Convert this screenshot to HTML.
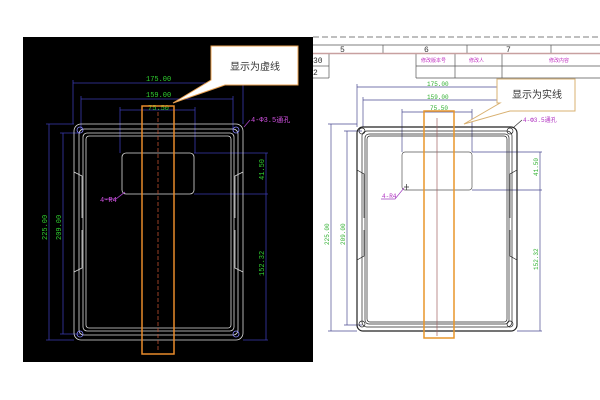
<!DOCTYPE html>
<html><head><meta charset="utf-8"><style>
html,body{margin:0;padding:0;background:#fff;width:600px;height:400px;overflow:hidden}
svg{display:block}
text{font-family:"Liberation Mono","Noto Sans CJK SC",monospace}
</style></head><body>
<svg width="600" height="400" viewBox="0 0 600 400" xmlns="http://www.w3.org/2000/svg">
<rect x="23" y="37" width="290" height="325" fill="#000"/>
<rect x="310" y="37" width="3" height="316" fill="#000"/>
<!-- LEFT DRAWING -->
<g fill="none" stroke-width="0.8">
 <g stroke="#3a3ab0">
  <line x1="73" y1="83" x2="243" y2="83"/><line x1="73" y1="80" x2="73" y2="124"/><line x1="243" y1="80" x2="243" y2="124"/>
  <line x1="81" y1="99" x2="233" y2="99"/><line x1="81" y1="96" x2="81" y2="130"/><line x1="233" y1="96" x2="233" y2="130"/>
  <line x1="120" y1="110" x2="195" y2="110"/><line x1="120" y1="107" x2="120" y2="153"/><line x1="195" y1="107" x2="195" y2="153"/>
  <line x1="49" y1="124" x2="49" y2="340"/><line x1="46" y1="124" x2="74" y2="124"/><line x1="46" y1="340" x2="74" y2="340"/>
  <line x1="63" y1="133" x2="63" y2="334"/><line x1="60" y1="133" x2="80" y2="133"/><line x1="60" y1="334" x2="80" y2="334"/>
  <line x1="266" y1="153" x2="266" y2="340"/><line x1="194" y1="153" x2="268" y2="153"/><line x1="194" y1="194" x2="268" y2="194"/><line x1="243" y1="340" x2="268" y2="340"/>
 </g>
 <g stroke="#ddd">
  <rect x="74" y="124" width="169" height="216" rx="7"/>
  <rect x="79" y="129" width="159" height="206" rx="5"/>
  <rect x="83" y="133" width="151" height="198" rx="4"/>
  <rect x="86" y="136" width="145" height="192" rx="3"/>
  <rect x="122" y="153" width="72" height="41" rx="4"/>
  <path d="M74 172 L82 176 L82 218 M74 272 L82 268 L82 230 M243 172 L235 176 L235 218 M243 272 L235 268 L235 230"/>
 </g>
 <g stroke="#8888ff"><circle cx="80" cy="130" r="3"/><circle cx="236" cy="130" r="3"/><circle cx="80" cy="334" r="3"/><circle cx="236" cy="334" r="3"/></g>
 <line x1="158" y1="112" x2="158" y2="352" stroke="#c05030" stroke-dasharray="4,2"/>
 <path d="M125 192 L116 199 L104 199" stroke="#a040c0"/>
 <line x1="244" y1="127" x2="250" y2="120" stroke="#a040c0"/>
</g>
<g font-size="7" fill="#30d030">
 <text x="146" y="81">175.00</text><text x="146" y="97">159.00</text><text x="148" y="110">75.50</text>
 <text transform="translate(47,240) rotate(-90)">225.00</text>
 <text transform="translate(61,240) rotate(-90)">209.00</text>
 <text transform="translate(264,180) rotate(-90)">41.50</text>
 <text transform="translate(264,276) rotate(-90)">152.32</text>
</g>
<g font-size="7" fill="#d050e0"><text x="251" y="122">4-Φ3.5通孔</text><text x="100" y="202">4-R4</text></g>
<rect x="142" y="106" width="32" height="248" fill="none" stroke="#e88a2a" stroke-width="1.5"/>
<path d="M211 46 H298 V85 H225 L173 103 L211 80 Z" fill="#fff" stroke="#e8a050" stroke-width="1"/>
<text x="230" y="70" font-size="10" fill="#333" font-family="'Noto Sans CJK SC',sans-serif">显示为虚线</text>

<!-- RIGHT: header table -->
<line x1="313" y1="37" x2="600" y2="37" stroke="#555" stroke-dasharray="6,3" stroke-width="0.8"/>
<g stroke="#555" stroke-width="0.7" fill="none">
 <line x1="313" y1="45" x2="600" y2="45"/>
 <line x1="383" y1="45" x2="383" y2="53"/><line x1="467" y1="45" x2="467" y2="53"/><line x1="551" y1="45" x2="551" y2="53"/>
 <line x1="313" y1="66" x2="329" y2="66"/><line x1="329" y1="54" x2="329" y2="78"/><line x1="313" y1="78" x2="329" y2="78"/>
 <line x1="416" y1="54" x2="416" y2="78"/><line x1="455" y1="54" x2="455" y2="78"/><line x1="502" y1="54" x2="502" y2="78"/>
 <line x1="416" y1="66" x2="600" y2="66"/><line x1="416" y1="78" x2="600" y2="78"/>
</g>
<line x1="313" y1="53.5" x2="600" y2="53.5" stroke="#c8a0a0" stroke-width="1.5"/>
<g font-size="8" fill="#333" font-family="'Liberation Sans',sans-serif"><text x="340" y="52">5</text><text x="424" y="52">6</text><text x="506" y="52">7</text><text x="313" y="63">30</text><text x="313" y="75">2</text></g>
<g font-size="5" fill="#c030c0" font-family="'Noto Sans CJK SC',sans-serif"><text x="421" y="62">修改版本号</text><text x="469" y="62">修改人</text><text x="549" y="62">修改内容</text></g>
<!-- RIGHT drawing -->
<g fill="none" stroke-width="0.7">
 <g stroke="#4a4a90">
  <line x1="357" y1="87" x2="510" y2="87"/><line x1="357" y1="84" x2="357" y2="127"/>
  <line x1="363" y1="100" x2="505" y2="100"/><line x1="363" y1="97" x2="363" y2="127"/>
  <line x1="402" y1="112" x2="472" y2="112"/><line x1="402" y1="109" x2="402" y2="152"/><line x1="472" y1="109" x2="472" y2="152"/>
  <line x1="331" y1="124" x2="331" y2="331"/><line x1="328" y1="124" x2="357" y2="124"/><line x1="328" y1="331" x2="357" y2="331"/>
  <line x1="347" y1="131" x2="347" y2="325"/><line x1="344" y1="131" x2="362" y2="131"/><line x1="344" y1="325" x2="362" y2="325"/>
  <line x1="540" y1="152" x2="540" y2="331"/><line x1="472" y1="152" x2="542" y2="152"/><line x1="472" y1="190" x2="542" y2="190"/><line x1="517" y1="331" x2="542" y2="331"/>
 </g>
 <g stroke="#222">
  <rect x="357" y="127" width="160" height="204" rx="6" stroke-width="1.2"/>
  <rect x="362" y="131" width="150" height="196" rx="5"/>
  <rect x="365" y="134" width="144" height="190" rx="4"/>
  <rect x="367" y="136" width="140" height="186" rx="3"/>
  <rect x="402" y="152" width="70" height="38" rx="3" stroke="#555"/>
  <path d="M357 170 L364 174 L364 218 M357 260 L364 256 L364 230 M517 170 L510 174 L510 218 M517 260 L510 256 L510 230"/>
  <circle cx="362" cy="131" r="3"/><circle cx="510" cy="131" r="3"/><circle cx="362" cy="324" r="3"/><circle cx="510" cy="324" r="3"/>
 </g>
 <line x1="437" y1="118" x2="437" y2="336" stroke="#a06060"/>
 <path d="M404 187 h5 M406.5 184 v6" stroke="#333"/>
 <path d="M404 188 L395 199 L381 199" stroke="#a040c0"/>
 <line x1="514" y1="127" x2="522" y2="120" stroke="#333"/>
</g>
<g font-size="6" fill="#30b030">
 <text x="427" y="86">175.00</text><text x="427" y="99">159.00</text><text x="430" y="110">75.50</text>
 <text transform="translate(329,245) rotate(-90)">225.00</text>
 <text transform="translate(345,245) rotate(-90)">209.00</text>
 <text transform="translate(538,176) rotate(-90)">41.50</text>
 <text transform="translate(538,270) rotate(-90)">152.32</text>
</g>
<g font-size="6" fill="#b030c0"><text x="523" y="122">4-Φ3.5通孔</text><text x="382" y="198">4-R4</text></g>
<rect x="424" y="111" width="30" height="227" fill="none" stroke="#e8962a" stroke-width="1.5"/>
<path d="M497 79 H575 V111 H510 L464 124 L500 103 L497 103 Z" fill="#fff" stroke="#d8b070" stroke-width="1"/>
<text x="512" y="98" font-size="10" fill="#333" font-family="'Noto Sans CJK SC',sans-serif">显示为实线</text>
</svg>
</body></html>
